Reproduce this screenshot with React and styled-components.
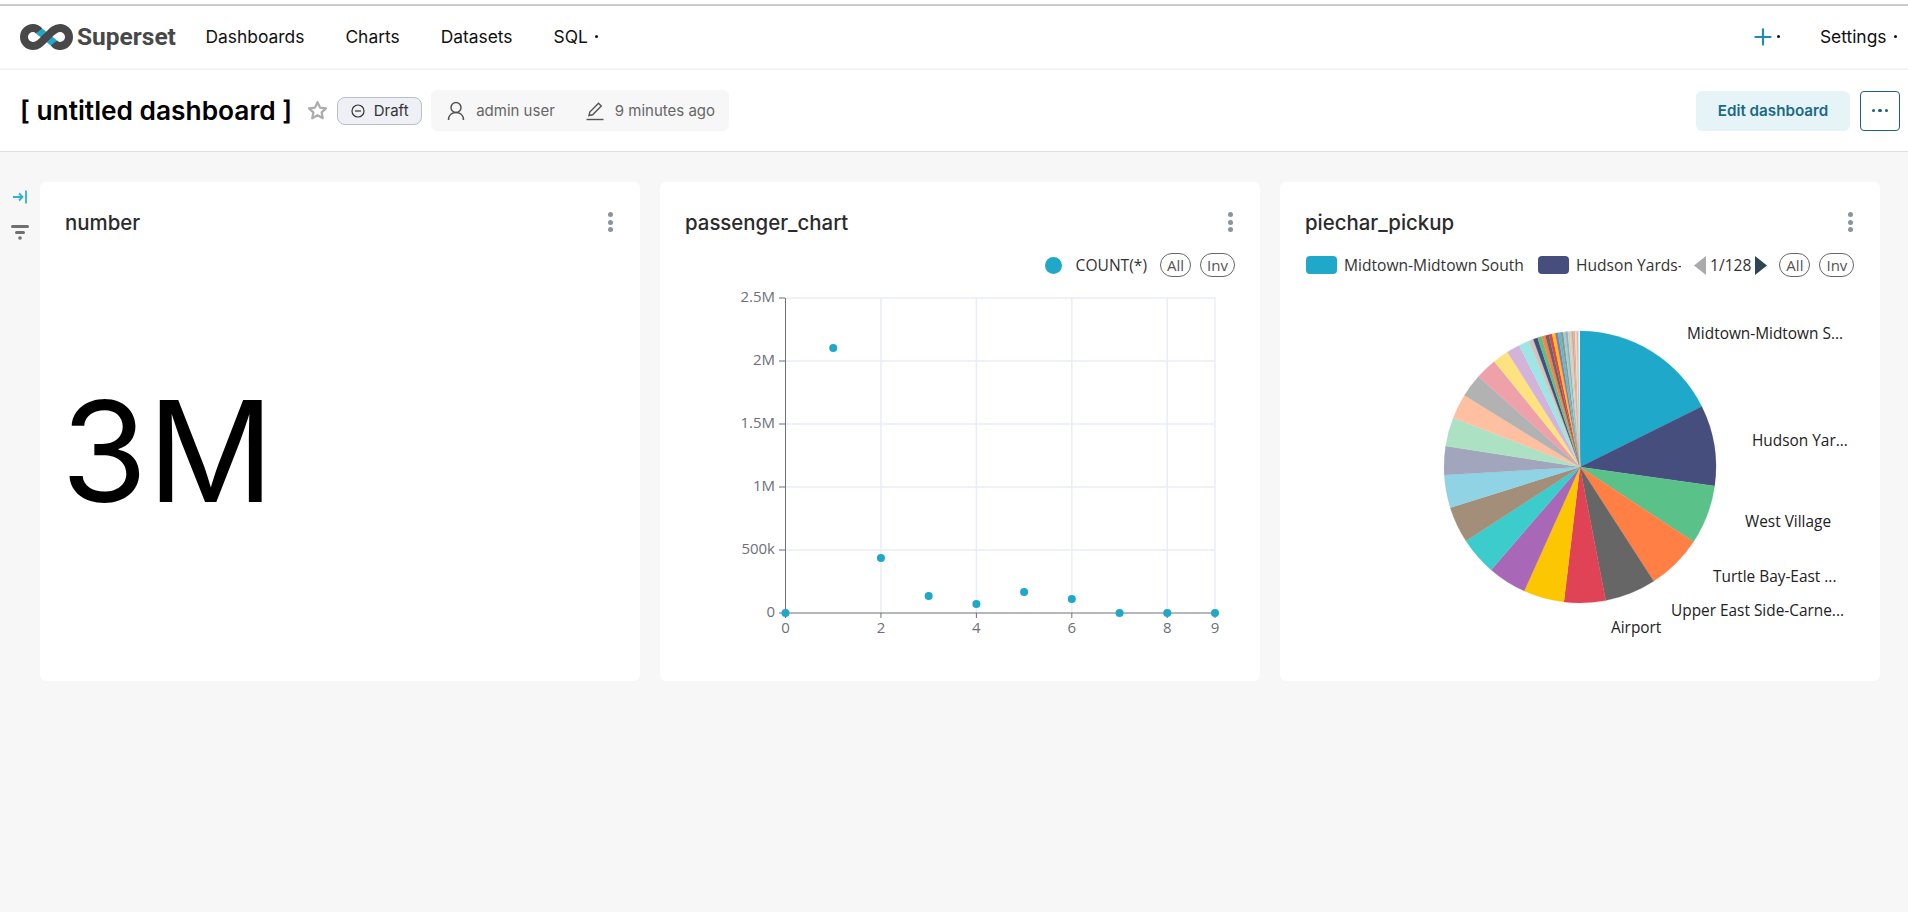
import React from "react";
import styled, { createGlobalStyle } from "styled-components";
import { Plus } from "lucide-react";

const GlobalStyle = createGlobalStyle`
  html, body {
    margin: 0;
    padding: 0;
    background: #f7f7f7;
    font-family: Inter, "Liberation Sans", sans-serif;
  }
  * { box-sizing: border-box; }
`;

const Page = styled.div`
  min-height: 912px;
  background: #f7f7f7;
`;

const TopRule = styled.div`
  height: 6px;
  background: #fff;
  border-bottom: 2px solid #cccccc;
`;

const Nav = styled.nav`
  height: 64px;
  background: #fff;
  border-bottom: 2px solid #f5f5f5;
  display: flex;
  align-items: center;
  padding: 0 11px 1px 20px;
`;

const Brand = styled.div`
  display: flex;
  align-items: center;
  gap: 4px;
  width: 185.5px;
  span {
    font-family: Roboto, sans-serif;
    font-size: 24.5px;
    font-weight: 700;
    color: #484848;
  }
`;

const NavLink = styled.a`
  font-size: 17.4px;
  color: #111;
  margin-right: ${(p) => p.$gap ?? 41}px;
  display: flex;
  align-items: center;
`;

const Caret = styled.i`
  display: inline-block;
  width: 3px;
  height: 3px;
  border-radius: 50%;
  background: #111;
  margin-left: ${(p) => p.$gap ?? 7.5}px;
`;

const NavRight = styled.div`
  margin-left: auto;
  display: flex;
  align-items: center;
  gap: 40px;
`;

const PlusWrap = styled.div`
  display: flex;
  align-items: center;
  color: #1f8cab;
`;

const Header = styled.header`
  height: 82px;
  background: #fff;
  border-bottom: 1px solid #e0e0e0;
  display: flex;
  align-items: center;
  padding: 0 8px 0 20px;
`;

const Title = styled.h1`
  margin: 0;
  font-size: 26.3px;
  font-weight: 600;
  color: #000;
  white-space: nowrap;
`;

const Star = styled.svg`
  margin-left: 15px;
  width: 21px;
  height: 21px;
`;

const DraftTag = styled.div`
  margin-left: 9px;
  width: 85px;
  height: 28px;
  border: 1px solid #b7bdd3;
  border-radius: 8px;
  background: #eef0f6;
  display: flex;
  align-items: center;
  justify-content: center;
  gap: 9px;
  font-size: 15px;
  color: #333;
`;

const Meta = styled.div`
  margin-left: 9px;
  width: 298px;
  height: 41px;
  border-radius: 6px;
  background: #f7f7f7;
  display: flex;
  align-items: center;
  padding-left: 16px;
  font-size: 15px;
  color: #666;
`;

const MetaItem = styled.div`
  display: flex;
  align-items: center;
  gap: 11px;
  margin-right: 31px;
  white-space: nowrap;
`;

const Actions = styled.div`
  margin-left: auto;
  display: flex;
  gap: 10px;
`;

const EditButton = styled.button`
  width: 154px;
  height: 40px;
  border: 0;
  border-radius: 6px;
  background: #e6f4f8;
  color: #1a6a85;
  font: 600 15.2px Inter, sans-serif;
`;

const MoreButton = styled.button`
  width: 40px;
  height: 40px;
  border: 1px solid #20607a;
  border-radius: 4px;
  background: #fff;
  display: flex;
  align-items: center;
  justify-content: center;
  gap: 3px;
  padding: 0;
  i {
    width: 3.5px;
    height: 3.5px;
    border-radius: 50%;
    background: #20607a;
  }
`;

const Body = styled.main`
  display: flex;
  padding-top: 30px;
`;

const Rail = styled.aside`
  width: 40px;
  display: flex;
  flex-direction: column;
  align-items: center;
  gap: 21px;
  padding: 8px 0 0 0;
`;

const Cards = styled.div`
  display: grid;
  grid-template-columns: repeat(3, 600px);
  gap: 20px;
`;

const Card = styled.section`
  height: 499px;
  background: #fff;
  border-radius: 6px;
  padding: 25px 25px 0;
  display: flex;
  flex-direction: column;
`;

const CardHead = styled.div`
  display: flex;
  align-items: center;
  justify-content: space-between;
  height: 30px;
`;

const CardTitle = styled.h2`
  margin: 0;
  font-size: 20.4px;
  font-weight: 500;
  color: #2b2b2b;
`;

const Kebab = styled.div`
  display: flex;
  flex-direction: column;
  gap: 2.5px;
  margin-right: 2.5px;
  i {
    width: 5px;
    height: 5px;
    border-radius: 50%;
    background: #8a949c;
  }
`;

const BigNumber = styled.div`
  flex: 1;
  display: flex;
  align-items: center;
  font-size: 140px;
  font-weight: 400;
  color: #000;
  margin-left: -4px;
  padding-bottom: 17px;
`;

const Legend = styled.div`
  display: flex;
  align-items: center;
  height: 24px;
  margin-top: 16px;
  padding-left: ${(p) => (p.$end ? 0 : 1)}px;
  font-family: "Open Sans", sans-serif;
  font-size: 15.6px;
  color: #333;
  justify-content: ${(p) => (p.$end ? "flex-end" : "flex-start")};
`;

const Dot = styled.i`
  width: 17px;
  height: 17px;
  border-radius: 50%;
  background: #1fa8c9;
  margin-right: 14px;
`;

const Swatch = styled.i`
  flex: none;
  width: 31px;
  height: 18px;
  border-radius: 4px;
  background: ${(p) => p.$color};
  margin-right: 7px;
`;

const LegendName = styled.span`
  flex: none;
  width: ${(p) => p.$width}px;
  margin-right: ${(p) => p.$gap}px;
  overflow: hidden;
  white-space: nowrap;
`;

const Pill = styled.span`
  flex: none;
  width: ${(p) => p.$width}px;
  height: 24px;
  margin-left: ${(p) => p.$gap}px;
  border: 1px solid #666;
  border-radius: 12px;
  display: flex;
  align-items: center;
  justify-content: center;
  font-size: 15px;
  color: #555;
`;

const Pager = styled.div`
  flex: none;
  display: flex;
  align-items: center;
  gap: 4px;
  color: #333;
  margin-left: 13px;
  svg { width: 12px; height: 19px; }
`;

const Plot = styled.svg`
  display: block;
  flex: none;
  margin: ${(p) => p.$top}px 0 0 -25px;
  font-family: "Open Sans", sans-serif;
`;

const SCATTER_TICKS_Y = [
  ["2.5M", 298],
  ["2M", 361],
  ["1.5M", 424],
  ["1M", 487],
  ["500k", 550],
  ["0", 613],
];

const SCATTER_TICKS_X = [0, 2, 4, 6, 8, 9];

const SCATTER_POINTS = [
  [0, 613],
  [1, 348],
  [2, 558],
  [3, 596],
  [4, 604],
  [5, 592],
  [6, 599],
  [7, 613],
  [8, 613],
  [9, 613],
];

const PALETTE = [
  "#1FA8C9", "#454E7C", "#5AC189", "#FF7F44", "#666666",
  "#E04355", "#FCC700", "#A868B7", "#3CCCCB", "#A38F79",
  "#8FD3E4", "#A1A6BD", "#ACE1C4", "#FEC0A1", "#B2B2B2",
  "#EFA1AA", "#FDE380", "#D3B3DA", "#9EE5E5", "#D1C6BC",
];

// end angle of each slice, clockwise from twelve o'clock
const BIG_SLICES = [
  63.6, 98, 123.4, 147.2, 169.1, 186.8, 204.2, 220.8, 237, 252.6,
  266.6, 278.9, 291.2, 301.8, 311.7, 320.9, 327.7, 333.4, 337.9, 339.9,
];

const slicePath = (a0, a1) => {
  const cx = 300;
  const cy = 136;
  const r = 136;
  const pt = (a) => {
    const t = (a * Math.PI) / 180;
    return `${(cx + r * Math.sin(t)).toFixed(2)} ${(cy - r * Math.cos(t)).toFixed(2)}`;
  };
  return `M${cx} ${cy}L${pt(a0)}A${r} ${r} 0 ${a1 - a0 > 180 ? 1 : 0} 1 ${pt(a1)}Z`;
};

const buildSlices = () => {
  const out = [];
  let from = 0;
  BIG_SLICES.forEach((end, i) => {
    out.push({ from, to: end, color: PALETTE[i] });
    from = end;
  });
  // the long tail of small neighbourhoods
  let idx = 1;
  let step = 1.9;
  while (from < 359.3) {
    const to = Math.min(from + step, 359.3);
    out.push({ from, to, color: PALETTE[idx % 20] });
    from = to;
    idx += 1;
    step = Math.max(step * 0.93, 0.22);
  }
  return out;
};

const PIE_LABELS = [
  ["Midtown-Midtown S...", 1687, 334],
  ["Hudson Yar...", 1752, 441],
  ["West Village", 1745, 522],
  ["Turtle Bay-East ...", 1713, 577],
  ["Upper East Side-Carne...", 1671, 611],
  ["Airport", 1611, 628],
];

const LogoMark = () => (
  <svg width="53" height="26" viewBox="0 0 53 26" fill="none">
    <path d="M18.5 6.5 L34.5 19.5" stroke="#20a7c9" strokeWidth="8" />
    <path
      d="M19 7 C17.5 5 15.5 4 13 4 A9 9 0 0 0 13 22 C19 22 22 17 26.5 13 C31 9 34 4 40 4 A9 9 0 0 1 40 22 C37.5 22 35.5 21 34 19"
      stroke="#484848"
      strokeWidth="8"
    />
  </svg>
);

const ScatterPlot = () => {
  const x = (v) => 785.5 + v * 47.72;
  return (
    <Plot $top={13} width="600" height="370" viewBox="660 290 600 370">
      {SCATTER_TICKS_Y.map(([label, y]) => (
        <g key={label}>
          {y !== 613 && <line x1="785" x2="1215" y1={y} y2={y} stroke="#e9edf5" strokeWidth="1.5" />}
          <line x1="779" x2="785" y1={y} y2={y} stroke="#6e7079" />
          <text x="775" y={y + 4} textAnchor="end" fontSize="15" fill="#6e7079">{label}</text>
        </g>
      ))}
      {SCATTER_TICKS_X.map((v) => (
        <g key={v}>
          {v !== 0 && <line x1={x(v)} x2={x(v)} y1="298" y2="613" stroke="#e9edf5" strokeWidth="1.5" />}
          <line x1={x(v)} x2={x(v)} y1="613" y2="618" stroke="#6e7079" />
          <text x={x(v)} y="633" textAnchor="middle" fontSize="15" fill="#6e7079">{v}</text>
        </g>
      ))}
      <line x1="785.5" x2="785.5" y1="298" y2="613" stroke="#6e7079" />
      <line x1="785" x2="1215" y1="613" y2="613" stroke="#6e7079" />
      {SCATTER_POINTS.map(([v, y]) => (
        <circle key={v} cx={x(v)} cy={y} r="4" fill="#1fa8c9" />
      ))}
    </Plot>
  );
};

const PiePlot = () => (
  <Plot $top={33} width="600" height="340" viewBox="1280 310 600 340">
    <g transform="translate(1280 331)">
      {buildSlices().map((s) => (
        <path key={s.from} d={slicePath(s.from, s.to)} fill={s.color} stroke={s.color} strokeWidth="0.2" />
      ))}
    </g>
    {PIE_LABELS.map(([label, lx, ly]) => (
      <text key={label} x={lx} y={ly + 5} fontSize="15.4" fill="#222">{label}</text>
    ))}
  </Plot>
);

const KebabIcon = () => (
  <Kebab>
    <i />
    <i />
    <i />
  </Kebab>
);

const App = () => (
  <Page>
    <GlobalStyle />
    <TopRule />
    <Nav>
      <Brand>
        <LogoMark />
        <span>Superset</span>
      </Brand>
      <NavLink>Dashboards</NavLink>
      <NavLink>Charts</NavLink>
      <NavLink>Datasets</NavLink>
      <NavLink>SQL<Caret /></NavLink>
      <NavRight>
        <PlusWrap>
          <Plus size={26} strokeWidth={2} />
          <Caret $gap={1} />
        </PlusWrap>
        <NavLink $gap={0}>Settings<Caret /></NavLink>
      </NavRight>
    </Nav>
    <Header>
      <Title>[ untitled dashboard ]</Title>
      <Star viewBox="0 0 24 24" fill="none" stroke="#adadad" strokeWidth="2.6" strokeLinejoin="round">
        <path d="M12 2.5l2.9 6.2 6.8.8-5 4.6 1.3 6.7-6-3.4-6 3.4 1.3-6.7-5-4.6 6.8-.8z" />
      </Star>
      <DraftTag>
        <svg width="14" height="14" viewBox="0 0 14 14" fill="none" stroke="#333" strokeWidth="1.2">
          <circle cx="7" cy="7" r="6" />
          <line x1="4" x2="10" y1="7" y2="7" />
        </svg>
        Draft
      </DraftTag>
      <Meta>
        <MetaItem>
          <svg width="18" height="20" viewBox="0 0 18 20" fill="none" stroke="#555" strokeWidth="1.5">
            <circle cx="9" cy="6.5" r="5" />
            <path d="M1.5 19c0-4.5 3-7.5 7.5-7.5s7.5 3 7.5 7.5" />
          </svg>
          admin user
        </MetaItem>
        <MetaItem>
          <svg width="18" height="20" viewBox="0 0 18 20" fill="none" stroke="#555" strokeWidth="1.4">
            <path d="M3 14.5l.8-3.5L12.5 2.3l2.8 2.8L6.6 13.8z" />
            <line x1="0.5" x2="17.5" y1="18.5" y2="18.5" />
          </svg>
          9 minutes ago
        </MetaItem>
      </Meta>
      <Actions>
        <EditButton>Edit dashboard</EditButton>
        <MoreButton>
          <i />
          <i />
          <i />
        </MoreButton>
      </Actions>
    </Header>
    <Body>
      <Rail>
        <svg width="16" height="14" viewBox="0 0 16 14" fill="none" stroke="#30b0d3" strokeWidth="1.8">
          <path d="M1 7h9M7 3.5L10.5 7 7 10.5M14 0.5v13" />
        </svg>
        <svg width="18" height="15" viewBox="0 0 18 15" fill="#6f6f6f">
          <rect x="0" y="0" width="18" height="3" rx="1.5" />
          <rect x="4" y="6" width="10" height="3" rx="1.5" />
          <circle cx="9" cy="13" r="1.8" />
        </svg>
      </Rail>
      <Cards>
        <Card>
          <CardHead>
            <CardTitle>number</CardTitle>
            <KebabIcon />
          </CardHead>
          <BigNumber>3M</BigNumber>
        </Card>
        <Card>
          <CardHead>
            <CardTitle>passenger_chart</CardTitle>
            <KebabIcon />
          </CardHead>
          <Legend $end>
            <Dot />
            COUNT(*)
            <Pill $width={31} $gap={13}>All</Pill>
            <Pill $width={35} $gap={9}>Inv</Pill>
          </Legend>
          <ScatterPlot />
        </Card>
        <Card>
          <CardHead>
            <CardTitle>piechar_pickup</CardTitle>
            <KebabIcon />
          </CardHead>
          <Legend>
            <Swatch $color="#1fa8c9" />
            <LegendName $width={181} $gap={13}>Midtown-Midtown South</LegendName>
            <Swatch $color="#454e7c" />
            <LegendName $width={105} $gap={0}>Hudson Yards-Chelsea</LegendName>
            <Pager>
              <svg viewBox="0 0 12 19"><path d="M12 0v19L0 9.5z" fill="#aaa" /></svg>
              1/128
              <svg viewBox="0 0 12 19"><path d="M0 0v19l12-9.5z" fill="#2f4554" /></svg>
            </Pager>
            <Pill $width={31} $gap={12}>All</Pill>
            <Pill $width={35} $gap={9}>Inv</Pill>
          </Legend>
          <PiePlot />
        </Card>
      </Cards>
    </Body>
  </Page>
);

export default App;
